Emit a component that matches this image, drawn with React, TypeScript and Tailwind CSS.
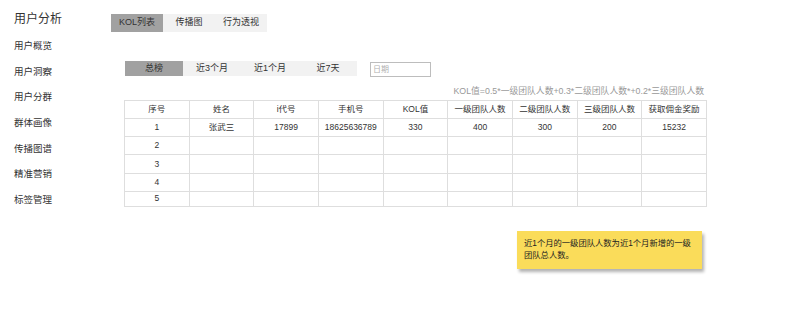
const font = { fontFamily: '"Liberation Sans", "Noto Sans CJK SC", sans-serif' }

const navItems = ['用户概览', '用户洞察', '用户分群', '群体画像', '传播图谱', '精准营销', '标签管理']
const tabs = ['KOL列表', '传播图', '行为透视']
const ranges = ['总榜', '近3个月', '近1个月', '近7天']
const headers = ['序号', '姓名', 'i代号', '手机号', 'KOL值', '一级团队人数', '二级团队人数', '三级团队人数', '获取佣金奖励']
const rows = [
  ['1', '张武三', '17899', '18625636789', '330', '400', '300', '200', '15232'],
  ['2', '', '', '', '', '', '', '', ''],
  ['3', '', '', '', '', '', '', '', ''],
  ['4', '', '', '', '', '', '', '', ''],
  ['5', '', '', '', '', '', '', '', ''],
]

export default function App() {
  return (
    <div className="flex w-[800px] h-[335px] bg-white text-[#333]" style={font}>
      <aside className="w-[111px] shrink-0 pl-[14px] pt-[8px]">
        <h1 className="h-[22px] leading-[22px] text-[12px]">用户分析</h1>
        <ul className="mt-[3px]">
          {navItems.map(item => (
            <li key={item} className="h-[25.67px] leading-[25.67px] text-[9.5px]">
              {item}
            </li>
          ))}
        </ul>
      </aside>

      <main className="pt-[14px]">
        <div className="flex h-[18px] text-[9px]">
          {tabs.map((tab, i) => (
            <div
              key={tab}
              className={`w-[52px] flex items-center justify-center ${i === 0 ? 'bg-[#a1a1a1]' : 'bg-[#f2f2f2]'}`}
            >
              {tab}
            </div>
          ))}
        </div>

        <div className="ml-[14px] mt-[29px] flex items-start">
          <div className="flex h-[15px] text-[9px]">
            {ranges.map((r, i) => (
              <div
                key={r}
                className={`w-[58px] flex items-center justify-center ${i === 0 ? 'bg-[#a1a1a1]' : 'bg-[#f2f2f2]'}`}
              >
                {r}
              </div>
            ))}
          </div>
          <div className="ml-[13px] mt-[1px] w-[61px] h-[15px] border border-[#bdbdbd] pl-[2px] text-[8px] leading-[13px] text-[#b0b0b0]">
            日期
          </div>
        </div>

        <div className="ml-[13px] w-[583px]">
          <p className="mt-[6px] h-[16px] leading-[16px] pr-[3px] text-right text-[8.8px] text-[#999]">
            KOL值=0.5*一级团队人数+0.3*二级团队人数*+0.2*三级团队人数
          </p>
          <table className="mt-[1px] w-[583px] table-fixed border-collapse text-[8.5px]">
            <thead>
              <tr className="h-[18px]">
                {headers.map(h => (
                  <th key={h} className="border border-[#dedede] font-normal text-center">
                    {h}
                  </th>
                ))}
              </tr>
            </thead>
            <tbody>
              {rows.map((row, ri) => (
                <tr key={ri} className={ri === rows.length - 1 ? 'h-[15px]' : 'h-[18.2px]'}>
                  {row.map((cell, ci) => (
                    <td key={ci} className="border border-[#dedede] text-center">
                      {cell}
                    </td>
                  ))}
                </tr>
              ))}
            </tbody>
          </table>

          <div className="ml-[393px] mt-[24px] w-[185px] h-[38px] bg-[#fadc5a] px-[7px] pt-[6px] text-[8.3px] leading-[12px] text-[#222] shadow-[2px_3px_3px_rgba(0,0,0,0.3)]">
            近1个月的一级团队人数为近1个月新增的一级团队总人数。
          </div>
        </div>
      </main>
    </div>
  )
}
